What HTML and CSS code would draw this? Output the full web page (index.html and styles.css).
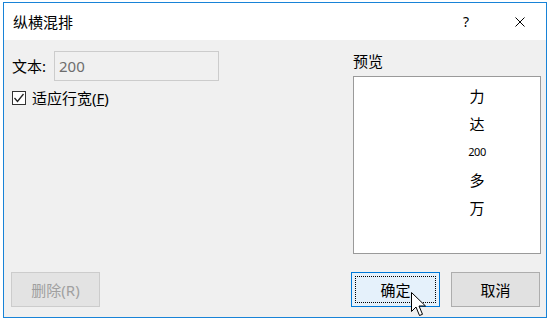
FILE: index.html
```html
<!DOCTYPE html>
<html lang="zh-CN">
<head>
    <meta charset="UTF-8">
    <title>纵横混排</title>
    <link rel="stylesheet" href="styles.css">
</head>
<body>
    <div class="window">
        <div class="titlebar">
            <span class="title">纵横混排</span>
            <span class="help">?</span>
            <svg class="close" width="10" height="10" viewBox="0 0 10 10">
                <path d="M0.5 0.5 L9.5 9.5 M9.5 0.5 L0.5 9.5" stroke="#000" stroke-width="1" fill="none"/>
            </svg>
        </div>
        <div class="content">
            <div class="main">
                <div class="left">
                    <div class="field">
                        <label class="field-label">文本:</label>
                        <input class="text-input" type="text" value="200" disabled>
                    </div>
                    <label class="check">
                        <span class="box">
                            <svg width="12" height="12" viewBox="0 0 12 12">
                                <path d="M1.5 6 L4.5 9.5 L10.5 2" stroke="#222" stroke-width="1.3" fill="none"/>
                            </svg>
                        </span>
                        <span>适应行宽(<u>F</u>)</span>
                    </label>
                </div>
                <div class="right">
                    <div class="preview-label">预览</div>
                    <div class="preview">
                        <div class="column">
                            <span>力</span>
                            <span>达</span>
                            <span class="num">200</span>
                            <span>多</span>
                            <span>万</span>
                        </div>
                    </div>
                </div>
            </div>
            <div class="buttons">
                <button class="btn delete" disabled>删除(R)</button>
                <button class="btn ok"><span class="focus">确定</span></button>
                <button class="btn">取消</button>
            </div>
        </div>
        <svg class="cursor" width="16" height="26" viewBox="0 0 16 26">
            <path d="M0.5 0.5 L0.5 19.5 L5 15 L8.5 23.5 L11.5 22.3 L8 14 L14.5 14 Z" fill="#fff" stroke="#000" stroke-width="1"/>
        </svg>
    </div>
</body>
</html>
```

FILE: styles.css
```css
body {
    margin: 0;
    background: #fff;
    font-family: "Noto Sans", "Noto Sans CJK SC", sans-serif;
    font-size: 15px;
    color: #000;
}

.window {
    position: relative;
    margin: 2px 0 0 3px;
    width: 544px;
    height: 316px;
    box-sizing: border-box;
    border: 1px solid #1883d7;
    background: #f0f0f0;
    display: flex;
    flex-direction: column;
}

.titlebar {
    height: 37px;
    background: #fff;
    display: flex;
    align-items: center;
    padding: 1px 0 0 9px;
    box-sizing: border-box;
}

.title {
    flex: 1;
    line-height: 20px;
}

.help {
    width: 10px;
    text-align: center;
    font-size: 14px;
    line-height: 16px;
    margin-right: 44px;
}

.close {
    margin-right: 21px;
}

.content {
    flex: 1;
    display: flex;
    flex-direction: column;
}

.main {
    display: flex;
    padding: 11px 0 0 8px;
}

.left {
    width: 341px;
}

.field {
    display: flex;
    align-items: center;
    height: 30px;
}

.field-label {
    width: 42px;
    line-height: 20px;
}

.text-input {
    width: 165px;
    height: 30px;
    box-sizing: border-box;
    border: 1px solid #cccccc;
    background: #f0f0f0;
    color: #6d6d6d;
    padding: 0 4px;
    margin: 0;
    font: inherit;
    font-size: 15px;
}

.check {
    display: flex;
    align-items: center;
    margin-top: 10px;
    height: 14px;
    line-height: 18px;
}

.box {
    width: 14px;
    height: 14px;
    box-sizing: border-box;
    border: 1px solid #333;
    background: #fff;
    display: flex;
    align-items: center;
    justify-content: center;
    margin-right: 6px;
}

.right {
    width: 188px;
}

.preview-label {
    line-height: 20px;
    margin-bottom: 5px;
}

.preview {
    height: 178px;
    box-sizing: border-box;
    border: 1px solid #9a9a9a;
    background: #fff;
    padding-top: 5px;
}

.column {
    width: 30px;
    margin-left: 108px;
    display: flex;
    flex-direction: column;
    align-items: center;
    line-height: 28px;
}

.column .num {
    font-size: 11px;
    letter-spacing: -0.5px;
}

.buttons {
    margin-top: auto;
    display: flex;
    gap: 11px;
    padding: 0 6px 10px 7px;
}

.btn {
    width: 89px;
    height: 35px;
    box-sizing: border-box;
    border: 1px solid #adadad;
    background: #e1e1e1;
    font: inherit;
    font-size: 15px;
    color: #000;
    padding: 0;
    margin: 0;
}

.btn.delete {
    margin-right: auto;
    border-color: #cccccc;
    background: #e3e3e3;
    color: #a0a0a0;
}

.btn.ok {
    border-color: #0078d7;
    background: #e5f1fb;
    padding: 3px;
}

.focus {
    display: flex;
    align-items: center;
    justify-content: center;
    height: 100%;
    box-sizing: border-box;
    border: 1px dotted #000;
}

.cursor {
    position: absolute;
    left: 407px;
    top: 289px;
}
```
